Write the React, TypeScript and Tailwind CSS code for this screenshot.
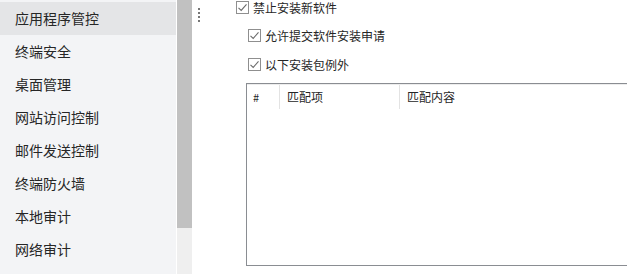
import React from "react";

const MENU = [
  "应用程序管控",
  "终端安全",
  "桌面管理",
  "网站访问控制",
  "邮件发送控制",
  "终端防火墙",
  "本地审计",
  "网络审计",
];

const FONT = { fontFamily: '"Noto Sans CJK SC", "Noto Sans", sans-serif' };

function Check() {
  return (
    <span className="flex h-[13px] w-[13px] shrink-0 items-center justify-center border border-[#8f8f8f] bg-white">
      <svg width="11" height="11" viewBox="0 0 11 11" fill="none">
        <path d="M1.5 5.8 L4.2 8.4 L9.5 2.4" stroke="#6a6a6a" strokeWidth="1.1" />
      </svg>
    </span>
  );
}

function CheckRow({ label, className }: { label: string; className: string }) {
  return (
    <div className={`flex h-[15px] items-center gap-[4px] ${className}`}>
      <Check />
      <span className="text-[12px] leading-[15px] text-[#262626]">{label}</span>
    </div>
  );
}

export default function App() {
  return (
    <div className="flex h-[274px] w-[627px] overflow-hidden bg-white" style={FONT}>
      {/* sidebar */}
      <div className="w-[176px] shrink-0 bg-[#f3f4f6] pt-[2px]">
        {MENU.map((m, i) => (
          <div
            key={m}
            className={`flex h-[33px] items-center pl-[15px] text-[14px] text-[#262626] ${
              i === 0 ? "bg-[#e4e5e7]" : ""
            }`}
          >
            {m}
          </div>
        ))}
      </div>

      {/* scrollbar */}
      <div className="w-[16px] shrink-0 border-l border-white bg-[#efefef]">
        <div className="h-[228px] bg-[#c1c1c1]" />
      </div>

      {/* content */}
      <div className="flex min-w-0 flex-1 overflow-hidden">
        <div className="flex w-[44px] shrink-0 flex-col gap-[2px] pl-[6px] pt-[8px]">
          <span className="h-[2px] w-[2px] bg-[#777]" />
          <span className="h-[2px] w-[2px] bg-[#777]" />
          <span className="h-[2px] w-[2px] bg-[#777]" />
          <span className="h-[2px] w-[2px] bg-[#777]" />
        </div>
        <div className="flex flex-col">
          <CheckRow label="禁止安装新软件" className="mt-[0px]" />
          <CheckRow label="允许提交软件安装申请" className="ml-[12px] mt-[13px]" />
          <CheckRow label="以下安装包例外" className="ml-[12px] mt-[14px]" />

          <div className="ml-[10px] mt-[11px] h-[183px] w-[390px] border border-[#8a8d92] bg-white">
            <div className="flex h-[25px] border-t border-[#ededed] text-[12px] text-[#262626]">
              <div className="flex w-[33px] items-center border-r border-[#e3e3e3] pl-[6px] text-[11px]">
                #
              </div>
              <div className="flex w-[120px] items-center border-r border-[#e3e3e3] pl-[7px]">
                匹配项
              </div>
              <div className="flex flex-1 items-center pl-[7px]">匹配内容</div>
            </div>
          </div>
        </div>
      </div>
    </div>
  );
}
